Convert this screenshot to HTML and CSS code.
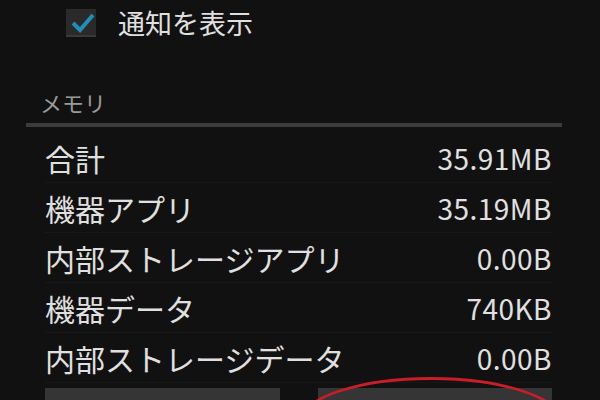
FILE: index.html
```html
<!DOCTYPE html>
<html lang="ja">
<head>
    <meta charset="UTF-8">
    <meta name="viewport" content="width=device-width, initial-scale=1.0">
    <title>アプリ情報</title>
    <link rel="stylesheet" href="styles.css">
</head>
<body>
    <div class="screen">
        <div class="notify">
            <span class="checkbox">
                <svg width="30" height="28" viewBox="0 0 30 28">
                    <path d="M7 14 L14 21 L27 6" fill="none" stroke="#1d8fb8" stroke-width="4"/>
                </svg>
            </span>
            <span class="notify-label">通知を表示</span>
        </div>

        <div class="section-title">メモリ</div>
        <div class="divider"></div>

        <div class="memory-list">
            <div class="row"><span class="label">合計</span><span class="value">35.91MB</span></div>
            <div class="row"><span class="label">機器アプリ</span><span class="value">35.19MB</span></div>
            <div class="row"><span class="label">内部ストレージアプリ</span><span class="value">0.00B</span></div>
            <div class="row"><span class="label">機器データ</span><span class="value">740KB</span></div>
            <div class="row"><span class="label">内部ストレージデータ</span><span class="value">0.00B</span></div>
        </div>

        <div class="buttons">
            <div class="button"></div>
            <div class="button"></div>
        </div>

        <div class="circle-mark"></div>
    </div>
</body>
</html>
```

FILE: styles.css
```css
body {
    margin: 0;
    padding: 0;
    background-color: #111;
    font-family: "Noto Sans CJK JP", "Noto Sans", sans-serif;
    color: #dcdcdc;
    overflow: hidden;
}

.screen {
    position: relative;
    width: 600px;
    height: 400px;
    overflow: hidden;
}

.notify {
    display: flex;
    align-items: center;
    height: 46px;
    padding-left: 66px;
    gap: 22px;
}

.checkbox {
    display: block;
    width: 30px;
    height: 28px;
    background-color: #2a2a2a;
    border-bottom: 2px solid #3a3a3a;
    box-sizing: border-box;
}

.checkbox svg {
    display: block;
}

.notify-label {
    font-size: 27px;
    line-height: 30px;
    color: #e0e0e0;
}

.section-title {
    margin-top: 44px;
    padding-left: 40px;
    font-size: 22px;
    line-height: 24px;
    color: #9a9a9a;
}

.divider {
    height: 4px;
    margin: 9px 38px 0 26px;
    background-color: #3c3c3c;
}

.memory-list {
    padding: 6px 48px 0 45px;
}

.row {
    display: flex;
    justify-content: space-between;
    align-items: center;
    height: 49px;
    border-bottom: 1px solid #181818;
    color: #e0e0e0;
}

.label {
    font-size: 30px;
    line-height: 34px;
}

.value {
    font-size: 28px;
    line-height: 34px;
    letter-spacing: 0.5px;
}

.buttons {
    display: flex;
    gap: 38px;
    margin-top: 5px;
    padding: 0 48px 0 45px;
}

.button {
    flex: 1;
    height: 40px;
    background-color: #353535;
}

.circle-mark {
    position: absolute;
    left: 300px;
    top: 377px;
    width: 262px;
    height: 88px;
    border: 3px solid #c81e28;
    border-radius: 50%;
    box-sizing: border-box;
}
```
